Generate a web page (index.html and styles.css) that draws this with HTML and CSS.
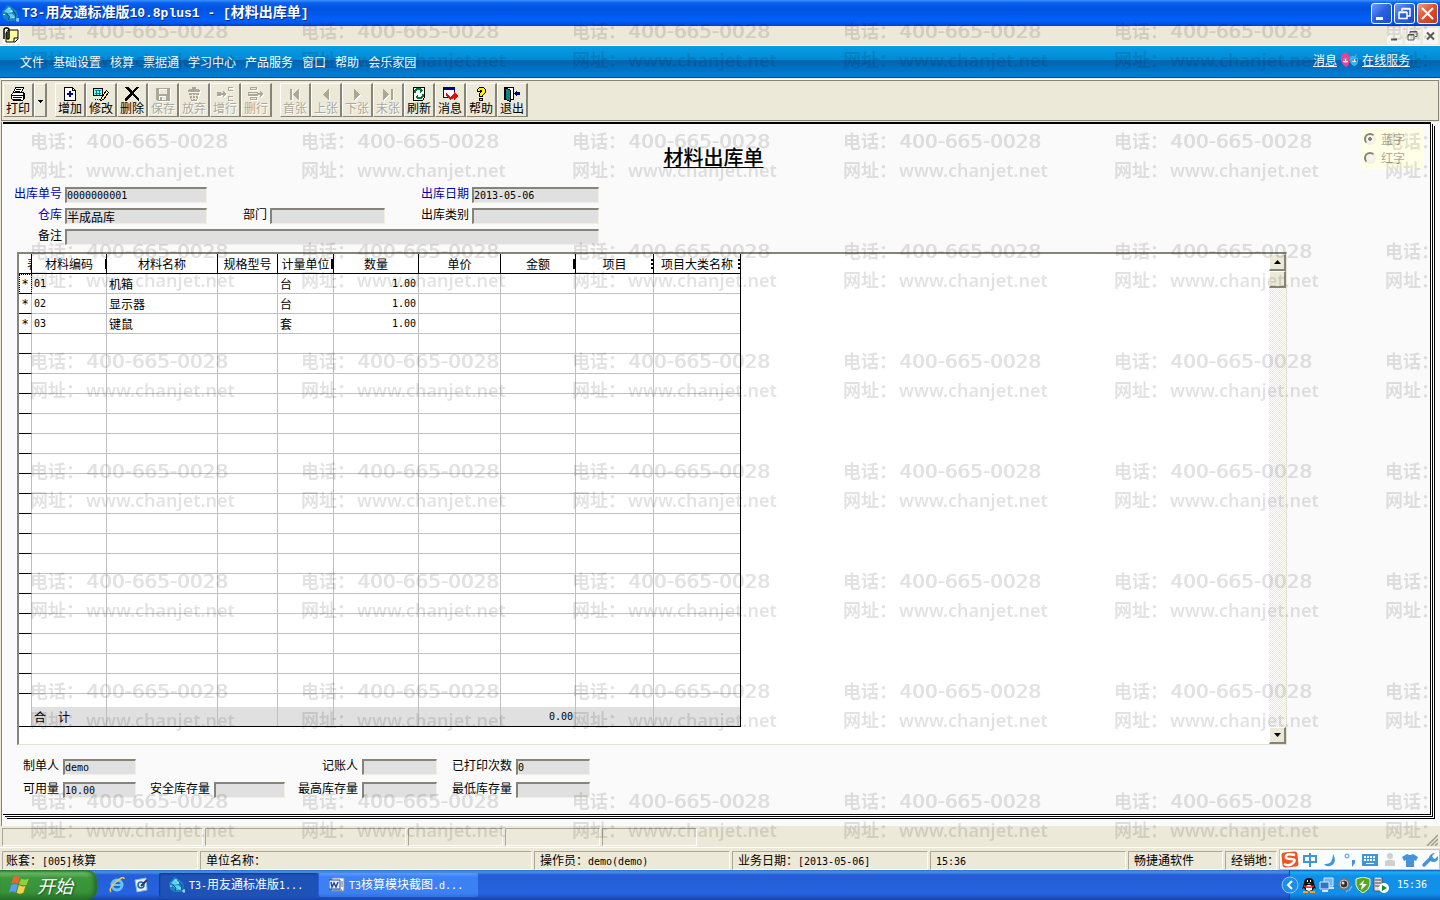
FILE: index.html
```html
<!DOCTYPE html>
<html lang="zh-CN">
<head>
    <meta charset="UTF-8">
    <title>T3-用友通标准版</title>
    <link rel="stylesheet" href="styles.css">
</head>
<body>
<svg width="0" height="0" class="defs">
    <symbol id="logo" viewBox="0 0 16 16">
        <path d="M0 6L3 3 5 0 8 1 10 3 13 5 15 9 14 12 12 15H5L1 12Z" fill="#1686c4"/>
        <path d="M2 6l4-4 5 4-5 2zM4 9l5-1 4 3-5 2z" fill="#5fd0ee"/>
        <path d="M4 8l3 3-1 3M10 5l3 4-1 4" stroke="#0b4a86" fill="none"/>
        <path d="M1 9h2M8 6h2M6 3h2M10 12h2M14 13h2v2h-2z" stroke="#c8f2ff" fill="none"/>
    </symbol>
</svg>
<div class="app">
    <header class="titleBar">
        <svg class="logo"><use href="#logo"/></svg>
        <h1>T3-<b>用友通标准版</b>10.8plus1 - [<b>材料出库单</b>]</h1>
        <div class="winBtns">
            <button aria-label="最小化"><svg viewBox="0 0 19 19"><path d="M4 13h7v3H4z" fill="#fff"/></svg></button>
            <button aria-label="还原"><svg viewBox="0 0 19 19"><path d="M7 7V5h8v7h-3M7 4.500h8M4 8.500h8v6H4zM4 8h8" fill="none" stroke="#fff" stroke-width="1.500"/></svg></button>
            <button class="close" aria-label="关闭"><svg viewBox="0 0 19 19"><path d="M4 4l11 11M15 4L4 15" stroke="#fff" stroke-width="2"/></svg></button>
        </div>
    </header>
    <div class="mdiBar">
        <svg class="mdiIcon" viewBox="0 0 17 17"><path d="M0 0h17v17H0z" fill="#fff"/><path d="M5 3h10v9l-3 3H3V6z" fill="#ffff9c" stroke="#000"/><path d="M15 11h-4v4" fill="#fff" stroke="#000"/><path d="M1 12V3q0-2 2-2h1q2 0 2 2v8q0 1-1 1t-1-1V5" fill="none" stroke="#000" stroke-width="1.500"/></svg>
        <div class="mdiBtns">
            <button aria-label="最小化窗口"><svg viewBox="0 0 15 15"><path d="M4 10h6v2H4z" fill="#5b5b55"/></svg></button>
            <button aria-label="还原窗口"><svg viewBox="0 0 15 15"><path d="M5 5V3h7v5h-2M5 3.500h7M3 6.500h6v5H3zM3 6h6" fill="none" stroke="#5b5b55"/></svg></button>
            <button aria-label="关闭窗口"><svg viewBox="0 0 15 15"><path d="M4 4l7 7M11 4l-7 7" stroke="#5b5b55" stroke-width="2"/></svg></button>
        </div>
    </div>
    <nav class="menuBar">
        <a href="#">文件</a>
        <a href="#">基础设置</a>
        <a href="#">核算</a>
        <a href="#">票据通</a>
        <a href="#">学习中心</a>
        <a href="#">产品服务</a>
        <a href="#">窗口</a>
        <a href="#">帮助</a>
        <a href="#">会乐家园</a>
        <div class="service">
            <a href="#">消息</a>
            <svg width="19" height="18" viewBox="0 0 19 18"><path d="M1 5q1-3 4-3l1-2 1 3q4 1 3 6-1 6-4 7-4-2-5-7z" fill="#e8419a"/><path d="M10 6q2-2 4-1l3-2-1 3q3 1 2 5-1 4-4 4-5-2-4-9z" fill="#35b5ea"/><path d="M3 8q2-1 5 0v3q-3 1-5 0zM12 8h4v3h-4z" fill="#ffd9dc"/><path d="M4 8v2M7 8v2M13 8v2M16 8v2" stroke="#333"/></svg>
            <a href="#">在线服务</a>
        </div>
    </nav>
    <div class="toolBar">
        <div class="group">
            <button class="print"><svg viewBox="0 0 16 16"><path d="M5.500 1.500h8l-2 5h-8z" fill="#fff" stroke="#000"/><path d="M6 3.500h5M5 5.500h5" stroke="#000"/><path d="M1.500 8.500l2-2h10l1 2v4l-2 2h-9l-2-2z" fill="#fff" stroke="#000"/><path d="M2 9.500h11M3 11.500h9M3 13.500h8M13.500 8v5" stroke="#000"/></svg>打印</button>
            <button class="drop" aria-label="打印选项"><svg viewBox="0 0 5 3"><path d="M0 0h5L2.500 3z"/></svg></button>
        </div>
        <div class="group">
            <button><svg viewBox="0 0 16 16"><path d="M2.500 1.500h8l3 3v10h-11z" fill="#fff" stroke="#000"/><path d="M10.500 1.500v3h3" fill="none" stroke="#000"/><path d="M8 5v6M5 8h6" stroke="#00008b" stroke-width="2"/></svg>增加</button>
            <button><svg viewBox="0 0 16 16"><path d="M.5 2.500h9v7h-9z" fill="#7ff" stroke="#000"/><path d="M2 4.500h6M2 7.500h6M3.500 4v5M6.500 4v5" stroke="#008080"/><path d="M13.500 4.500l2 2-5 7-3 1 1-3z" fill="#ff6" stroke="#000"/><path d="M2 13.500h5" stroke="#000" stroke-dasharray="1 1"/></svg>修改</button>
            <button><svg viewBox="0 0 16 16"><path d="M1 1h3l4 4 5-4h2v1L9 7l6 6v2h-1L8 9l-6 6H1v-2l5-6-5-5z" fill="#000"/></svg>删除</button>
            <button disabled><svg viewBox="0 0 16 16"><path d="M1 2h14v13H2l-1-1zM4 3v5h8V3zM4 10v4h7v-4z" fill-rule="evenodd"/><path d="M5 11h2v3H5z"/></svg>保存</button>
            <button disabled><svg viewBox="0 0 16 16"><path d="M2 4q5-3 12 0v2H2zM6 1h4v2H6zM3 7h10l-2 8H5z"/><path d="M6.500 8v6M9.500 8v6M4 9.500h8M5 12.500h6" stroke="#ece9d8"/></svg>放弃</button>
            <button disabled><svg viewBox="0 0 16 16"><path d="M0 6h4v4H0zM4 7h2v2H4zM6 5l4 3-4 3z"/><path d="M16 1.500h-4.500v3H16M16 10.500h-4.500v4H16" fill="none" stroke="#aca899"/></svg>增行</button>
            <button disabled><svg viewBox="0 0 16 16"><path d="M2 1h7v3H2zM2 11h7v3H2zM0 6h10v4H0zM10 7h2v2h-2zM12 5l4 3-4 3z"/><path d="M3 2.500h5M3 12.500h5M1 7.500h8" stroke="#ece9d8"/></svg>删行</button>
        </div>
        <div class="group">
            <button disabled><svg viewBox="0 0 16 16"><path d="M3 3h2v11H3zM12 3v11L6 8.500z"/></svg>首张</button>
            <button disabled><svg viewBox="0 0 16 16"><path d="M11 3v11L5 8.500z"/></svg>上张</button>
            <button disabled><svg viewBox="0 0 16 16"><path d="M5 3v11l6-5.500z"/></svg>下张</button>
            <button disabled><svg viewBox="0 0 16 16"><path d="M3 3v11l6-5.500zM11 3h2v11h-2z"/></svg>末张</button>
            <button><svg viewBox="0 0 16 16"><path d="M2.500 1.500h11v10l-2 3h-9z" fill="#fff" stroke="#000"/><path d="M4 7V5l2-2h3M12 8v2l-2 2H7" fill="none" stroke="#087830" stroke-width="2"/><path d="M9 2v5l3-3zM7 8v6l-3-3z" fill="#087830"/></svg>刷新</button>
            <button><svg viewBox="0 0 16 16"><path d="M1.500 1.500h11v10h-11z" fill="#fff" stroke="#000080"/><path d="M1 1h12v3H1z" fill="#000080"/><path d="M4 7l4 4 4-3V6l4 4-4 4v-2l-4 2-4-5z" fill="#e01010"/></svg>消息</button>
            <button><svg viewBox="0 0 16 16"><path d="M4.500 5.500v-2l2-2h4l2 2v3l-3 3v1h-3v-3l2-2v-1h-1v1zM6.500 12.500h3v2h-3z" fill="#ffee00" stroke="#000"/></svg>帮助</button>
            <button><svg viewBox="0 0 16 16"><path d="M.5 1.500h9v12h-9z" fill="#fff" stroke="#000"/><path d="M1.500 1.500l5 3v11l-5-2z" fill="#088" stroke="#000"/><path d="M10 7l3-3v2h3v3h-3v2z" fill="#000080"/></svg>退出</button>
        </div>
    </div>
    <main class="work">
        <form class="bill">
            <div class="billHead">
                <h2>材料出库单</h2>
                <div class="kind">
                    <label><input type="radio" name="kind" checked disabled>蓝字</label>
                    <label><input type="radio" name="kind" disabled>红字</label>
                </div>
            </div>
            <div class="fields">
                <label class="must" for="billNo">出库单号</label><input class="en" id="billNo" value="0000000001" readonly>
                <label class="must date" for="billDate">出库日期</label><input class="en" id="billDate" value="2013-05-06" readonly>
                <label class="must" for="store">仓库</label><input id="store" value="半成品库" readonly>
                <label for="dept">部门</label><input id="dept" readonly>
                <label for="type">出库类别</label><input id="type" readonly>
                <label for="memo">备注</label><input class="memo" id="memo" readonly>
            </div>
            <div class="sheet">
                <table>
                    <colgroup>
                        <col class="c0"><col class="c1"><col class="c2"><col class="c3"><col class="c4"><col class="c5"><col class="c6"><col class="c7"><col class="c8"><col class="c9">
                    </colgroup>
                    <thead>
                    <tr><th class="half">表</th><th class="cut">材料编码</th><th>材料名称</th><th>规格型号</th><th class="cut">计量单位</th><th>数量</th><th>单价</th><th class="cut">金额</th><th class="cut">项目</th><th class="cut">项目大类名称</th></tr>
                    </thead>
                    <tbody id="rows">
                    <tr><th class="focus">*</th><td class="en">01</td><td>机箱</td><td></td><td>台</td><td class="en num">1.00</td><td></td><td></td><td></td><td></td></tr>
                    <tr><th>*</th><td class="en">02</td><td>显示器</td><td></td><td>台</td><td class="en num">1.00</td><td></td><td></td><td></td><td></td></tr>
                    <tr><th>*</th><td class="en">03</td><td>键鼠</td><td></td><td>套</td><td class="en num">1.00</td><td></td><td></td><td></td><td></td></tr>
                    </tbody>
                    <tfoot>
                    <tr class="rest"><th></th><td></td><td></td><td></td><td></td><td></td><td></td><td></td><td></td><td></td></tr>
                    <tr class="total"><th></th><td>合　计</td><td></td><td></td><td></td><td></td><td></td><td class="en num">0.00</td><td></td><td></td></tr>
                    </tfoot>
                </table>
                <div class="scroll">
                    <button type="button" aria-label="向上"><svg viewBox="0 0 7 4"><path d="M0 4h7L3.500 0z"/></svg></button>
                    <div class="thumb"></div>
                    <button type="button" class="down" aria-label="向下"><svg viewBox="0 0 7 4"><path d="M0 0h7L3.500 4z"/></svg></button>
                </div>
            </div>
            <div class="fields billFoot">
                <label for="maker">制单人</label><input class="en" id="maker" value="demo" readonly>
                <label class="keeper" for="keeper">记账人</label><input id="keeper" readonly>
                <label for="printed">已打印次数</label><input class="en" id="printed" value="0" readonly>
                <label for="usable">可用量</label><input class="en" id="usable" value="10.00" readonly>
                <label for="safe">安全库存量</label><input id="safe" readonly>
                <label for="max">最高库存量</label><input id="max" readonly>
                <label for="min">最低库存量</label><input id="min" readonly>
            </div>
        </form>
    </main>
    <div class="paneBar">
        <span class="wide"></span><span class="wide"></span><span></span><span></span><span></span>
        <svg class="grip" viewBox="0 0 12 12"><path d="M12 1L1 12M12 5L5 12M12 9l-3 3" stroke="#9d9a88" stroke-width="1.500"/></svg>
    </div>
    <div class="statusBar">
        <span>账套：<i>[005]</i>核算</span>
        <span class="unit">单位名称：</span>
        <span>操作员：<i>demo(demo)</i></span>
        <span>业务日期：<i>[2013-05-06]</i></span>
        <span><i>15:36</i></span>
        <span class="soft">畅捷通软件</span>
        <span class="area">经销地：</span>
        <div class="ime">
            <svg viewBox="0 0 18 18"><rect x="1" y="1" width="16" height="15" rx="3" transform="rotate(-6 9 9)" fill="#ea5520"/><path d="M14 4q-8-2-9 1t5 3 2 4-9 1" fill="none" stroke="#fff" stroke-width="2.500"/></svg>
            <svg viewBox="0 0 18 18"><path d="M3 5h12v6H3zM9 2v14" fill="none" stroke="#4593d8" stroke-width="2"/></svg>
            <svg viewBox="0 0 18 18"><path d="M12 3q5 9-3 12-4 1-6-2 9 1 9-10z" fill="#4593d8"/></svg>
            <svg viewBox="0 0 18 18"><circle cx="6" cy="5" r="2" fill="none" stroke="#4593d8"/><path d="M11 9h3v3l-3 4v-3z" fill="#4593d8"/></svg>
            <svg viewBox="0 0 18 18"><path d="M1 3h16v12H1z" fill="#4593d8"/><path d="M3 6h12M3 9h12" stroke="#fff" stroke-width="2" stroke-dasharray="2 1"/><path d="M5 12.500h8" stroke="#fff"/></svg>
            <svg viewBox="0 0 18 18"><circle cx="9" cy="5" r="3" fill="#d0d0d0"/><path d="M4 10q5-3 10 0v5H4z" fill="#d0d0d0"/></svg>
            <svg viewBox="0 0 18 18"><path d="M6 3q3 2 6 0l5 3-2 4-2-1v7H5V9l-2 1-2-4z" fill="#4593d8"/></svg>
            <svg viewBox="0 0 18 18"><path d="M3 14l7-7" stroke="#4593d8" stroke-width="3.500" stroke-linecap="round"/><path d="M14 2l-3 3 1 2 2 1 3-3q1 6-5 6-5-1-4-5 2-4 6-4z" fill="#4593d8"/></svg>
        </div>
    </div>
    <footer class="taskBar">
        <button class="start"><svg viewBox="0 0 20 20"><path d="M4 3q3-2 6 0L8 9Q5 7 2 9z" fill="#f0642c"/><path d="M11 4q3 2 7 0l-2 6q-3 1-7-1z" fill="#8fd03c"/><path d="M2 10q3-2 6 0l-2 7q-3-2-6 0z" fill="#5a9cf4"/><path d="M9 10q3 2 6 1l-2 6q-3 2-6 0z" fill="#fbd03a"/></svg>开始</button>
        <div class="quick">
            <svg viewBox="0 0 16 16"><circle cx="8" cy="8" r="5" fill="none" stroke="#67c3ff" stroke-width="3"/><path d="M4 8h9" stroke="#67c3ff" stroke-width="2"/><path d="M2 15Q-1 12 7 5t8-3" fill="none" stroke="#f6c842" stroke-width="1.500"/></svg>
            <svg viewBox="0 0 16 16"><path d="M2 3l11-2 1 12-10 2z" fill="#e8f3ff" stroke="#7db7ee"/><circle cx="8" cy="8" r="3" fill="none" stroke="#1b62ba" stroke-width="1.500"/><path d="M8 9l6-6" stroke="#335" stroke-width="2"/></svg>
        </div>
        <button class="task on"><svg class="icon16"><use href="#logo"/></svg><span><i>T3-</i>用友通标准版<i>1...</i></span></button>
        <button class="task"><svg class="icon16" viewBox="0 0 16 16"><path d="M3 1h12v13H3z" fill="#fff" stroke="#88a"/><path d="M0 3h11v9H0z" fill="#e9eefb" stroke="#234a9c"/><path d="M2 5l1 5 2-4 2 4 2-5" fill="none" stroke="#234a9c" stroke-width="1.500"/><path d="M12 5h2M12 7h2M12 9h2M4 13h9" stroke="#567"/></svg><span><i>T3</i>核算模块截图<i>.d...</i></span></button>
        <div class="tray">
            <button class="fold" aria-label="隐藏图标"><svg viewBox="0 0 18 18"><circle cx="9" cy="9" r="8" fill="#1e8ceb" stroke="#8fc6f8"/><path d="M11 5L7 9l4 4" fill="none" stroke="#fff" stroke-width="2"/></svg></button>
            <svg viewBox="0 0 16 16"><path d="M3 6q0-5 5-5t5 5l2 6-2-1-2 3H5l-2-3-2 1z" fill="#111"/><path d="M5 9q3-2 6 0v4l-3 1-3-1z" fill="#fff"/><path d="M3 8q5 3 10 0v2q-5 2-10 0z" fill="#e22"/><path d="M6 3h1v2H6zM9 3h1v2H9z" fill="#fff"/><path d="M6 6h4l-2 1zM2 14h5v2H2zM9 14h5v2H9z" fill="#f9a51a"/></svg>
            <svg viewBox="0 0 16 16"><path d="M5 1h9v8H5z" fill="#6db7f4" stroke="#d8e8f8"/><path d="M1 5h9v7H1z" fill="#2c76c8" stroke="#d8e8f8"/><path d="M3 14h6M10 11h5" stroke="#dde" stroke-width="2"/></svg>
            <svg viewBox="0 0 16 16"><circle cx="7" cy="7" r="6" fill="#777"/><circle cx="7" cy="7" r="4" fill="#333" stroke="#ccc"/><circle cx="6" cy="6" r="1.500" fill="#ddd"/><path d="M12 14l3-5M9 15l2-2" stroke="#7ba6ff" stroke-width="1.500"/></svg>
            <svg viewBox="0 0 16 16"><path d="M8 0l7 2v6q-1 5-7 8-6-3-7-8V2z" fill="#58a71c" stroke="#eef8d0"/><path d="M9 3L4 8h3l-1 5 6-6H8z" fill="#fff"/></svg>
            <svg viewBox="0 0 16 16"><path d="M1 0h8v14H1z" fill="#ddd" stroke="#555"/><path d="M2 3h6M2 6h6M2 9h6" stroke="#444"/><circle cx="11" cy="11" r="5" fill="#fff"/><path d="M9 8l5 3-5 3z" fill="#1a9020"/></svg>
            <time>15:36</time>
        </div>
    </footer>
    <div class="watermark" id="watermark" aria-hidden="true"></div>
</div>
<script type="text/javascript">
    // 补足空白行
    var rows = document.getElementById('rows');
    while (rows.rows.length < 21) {
        var tr = document.createElement('tr');
        tr.innerHTML = '<th></th>' + new Array(10).join('<td></td>');
        rows.appendChild(tr);
    }
    // 水印平铺
    var mark = '<div class="mark"><p><b>电话：</b><span class="tel">400-665-0028</span></p><p><b>网址：</b>www.chanjet.net</p></div>';
    document.getElementById('watermark').innerHTML = new Array(49).join(mark);
</script>
</body>
</html>
```
FILE: styles.css
```css
*{
    box-sizing: border-box;
}
body,h1,h2,p{
    margin: 0;
}
body{
    font: 12px/16px "Noto Sans CJK SC", sans-serif;
    color: #000;
    background: #ece9d8;
}
button,input{
    font: inherit;
    padding: 0;
    margin: 0;
    border: 0;
    border-radius: 0;
}
i,.en{
    font-family: "DejaVu Sans Mono", "Noto Sans CJK SC", monospace;
    font-size: 10px;
    font-style: normal;
}
.defs{
    position: absolute;
}
.icon16{
    width: 16px;
    height: 16px;
    flex: none;
}
.app{
    position: relative;
    display: flex;
    flex-direction: column;
    min-height: 100vh;
    overflow: hidden;
}
/* 标题栏 */
.titleBar{
    display: flex;
    align-items: center;
    height: 26px;
    padding: 0 2px 0 2px;
    background: linear-gradient(#3b93ff 0, #0a5ff0 3px, #0053e1 9px, #0060fa 20px, #0058ee 23px, #0340c4);
}
.logo{
    width: 17px;
    height: 17px;
    flex: none;
}
.titleBar h1{
    flex: 1;
    padding: 0 0 2px 3px;
    font: bold 13px/20px "Liberation Mono", monospace;
    color: #fff;
    text-shadow: 1px 1px #0a2a80;
    white-space: pre;
}
.titleBar h1 b{
    font: bold 14px/20px "Noto Sans CJK SC", sans-serif;
}
.winBtns{
    display: flex;
    gap: 2px;
}
.winBtns button{
    width: 21px;
    height: 21px;
    border: 1px solid #fff;
    border-radius: 3px;
    background: linear-gradient(135deg, #6f9cf5, #2a5fe0 50%, #1c4fd0);
}
.winBtns .close{
    background: linear-gradient(135deg, #f09a80, #df4f27 50%, #c23a12);
}
.winBtns svg,.mdiBtns svg{
    display: block;
    width: 100%;
    height: 100%;
}
.mdiBar{
    display: flex;
    align-items: center;
    justify-content: space-between;
    height: 20px;
    padding: 0 2px 0 3px;
    border-bottom: 1px solid #fff;
}
.mdiIcon{
    width: 17px;
    height: 17px;
}
.mdiBtns{
    display: flex;
    gap: 3px;
}
.mdiBtns button{
    width: 15px;
    height: 16px;
    background: #f6f5f0;
}
/* 菜单 */
.menuBar{
    display: flex;
    align-items: center;
    gap: 9px;
    height: 32px;
    padding: 0 30px 0 20px;
    border-bottom: 1px solid #04518e;
    background: linear-gradient(#0a9ce6 0, #0089d3 14px, #0063ae 14px, #007fd6 31px);
}
.menuBar a{
    color: #fff;
    text-decoration: none;
}
.service{
    display: flex;
    align-items: center;
    gap: 3px;
    margin: 0 0 4px auto;
}
.service a{
    text-decoration: underline;
}
/* 工具栏 */
.toolBar{
    display: flex;
    gap: 8px;
    height: 41px;
    margin: 2px 1px 1px 1px;
    padding: 2px 1px;
    border: 1px solid #868478;
    box-shadow: 0 -1px #fff;
}
.group{
    display: flex;
}
.toolBar button{
    display: flex;
    flex-direction: column;
    align-items: center;
    width: 31px;
    height: 34px;
    padding-top: 2px;
    line-height: 12px;
    color: #000;
    background: #ece9d8;
    border: 1px solid;
    border-color: #fff #868478 #868478 #fff;
    border-right-width: 2px;
}
.toolBar svg{
    width: 16px;
    height: 16px;
    flex: none;
    shape-rendering: crispEdges;
}
.toolBar button:disabled{
    color: #aca899;
    text-shadow: 1px 1px #fff;
}
.toolBar button:disabled svg{
    fill: #aca899;
    filter: drop-shadow(1px 1px #fff);
}
.toolBar .drop{
    width: 13px;
    justify-content: center;
}
.toolBar .drop svg{
    width: 5px;
    height: 3px;
}
/* 单据 */
.work{
    flex: 1;
    display: flex;
    padding: 0 9px 11px 1px;
    margin-left: 1px;
    border-left: 1px solid #868478;
    background: #fafafa;
}
.bill{
    flex: 1;
    border: 1px solid #000;
    border-top-width: 2px;
    border-left-width: 0;
    box-shadow: 1px 1px #fff, 2px 2px #000, 3px 3px #fff, 4px 4px #000;
    background: #fafafa;
}
.billHead{
    display: grid;
    grid-template-columns: 1fr auto 1fr;
    align-items: end;
    padding: 3px 6px 0 0;
}
.billHead h2{
    grid-column: 2;
    font-size: 20px;
    line-height: 24px;
    font-weight: 500;
    text-decoration: underline;
    text-decoration-thickness: 1px;
    text-underline-offset: 2px;
}
.kind{
    justify-self: end;
    width: 62px;
    padding: 2px 0 2px 2px;
    background: #ffffe6;
}
.kind label{
    display: flex;
    align-items: center;
    gap: 5px;
    height: 19px;
    color: #aca899;
}
.kind input{
    appearance: none;
    width: 12px;
    height: 12px;
    border: 2px solid;
    border-color: #868478 #f1efe2 #f1efe2 #868478;
    border-radius: 50%;
    background: #f6f4ea;
}
.kind input:checked{
    background: radial-gradient(#868478 2px, #f6f4ea 2px);
}
.fields{
    display: grid;
    grid-template-columns: 48px 142px 57px 115px 81px 127px;
    grid-auto-rows: 16px;
    gap: 5px 3px;
    padding: 18px 0 0 11px;
}
.fields label{
    text-align: right;
    line-height: 12px;
    white-space: nowrap;
}
.fields input{
    width: 100%;
    height: 16px;
    min-width: 0;
    background: #e0e0e0;
    border: 1px solid;
    border-color: #868478 #f1efe2 #f1efe2 #868478;
    border-width: 2px 1px 1px 2px;
}
.fields .must{
    color: #0000b4;
}
.fields .date{
    grid-column: 5;
}
.fields .memo{
    grid-column: 2 / 7;
}
.sheet{
    display: flex;
    justify-content: space-between;
    align-items: flex-start;
    margin: 7px 143px 0 14px;
    border: 1px solid;
    border-color: #868478 #e4e2d4 #e4e2d4 #868478;
    border-width: 2px 1px 1px 2px;
    background: #fff;
}
.sheet table{
    table-layout: fixed;
    width: 722px;
    border-collapse: separate;
    border-spacing: 0;
    border-right: 1px solid #000;
    border-bottom: 1px solid #000;
}
.c0{ width: 13px; }
.c1{ width: 75px; }
.c2{ width: 111px; }
.c3{ width: 60px; }
.c4{ width: 56px; }
.c5{ width: 85px; }
.c6{ width: 82px; }
.c7{ width: 75px; }
.c8{ width: 78px; }
.c9{ width: 86px; }
.sheet th,.sheet td{
    height: 20px;
    padding: 0 2px;
    line-height: 18px;
    font-weight: normal;
    white-space: nowrap;
    overflow: hidden;
    border-right: 1px solid #c0c0c0;
    border-bottom: 1px solid #c0c0c0;
}
.sheet th:last-child,.sheet td:last-child{
    border-right: 0;
}
.sheet th{
    padding: 0;
    border-bottom-color: #000;
}
.sheet thead th{
    border-color: #000;
    position: relative;
}
/* 表头右侧被截断的列名 */
.sheet .cut::after{
    content: "";
    position: absolute;
    right: 0;
    top: 5px;
    width: 2px;
    height: 10px;
    background: #000;
}
.sheet .cut:nth-child(2)::after{
    width: 1px;
}
.sheet .cut:nth-child(9)::after,.sheet .cut:last-child::after{
    background: repeating-linear-gradient(#000 0 2px, #fff 2px 4px);
}
.sheet .half{
    padding-left: 8px;
    text-align: left;
    text-overflow: clip;
}
.sheet tbody th{
    font: 12px/18px "DejaVu Sans Mono", monospace;
}
.sheet .focus{
    outline: 1px dotted #000;
    outline-offset: -1px;
}
.sheet .num{
    text-align: right;
}
.sheet .rest th,.sheet .rest td{
    height: 13px;
    border-bottom: 0;
}
.sheet .total th,.sheet .total td{
    height: 19px;
    border-bottom: 0;
}
.sheet .total td{
    background: #e0e0e0;
}
.scroll{
    display: flex;
    flex-direction: column;
    align-self: stretch;
    width: 17px;
    min-height: 490px;
    background: repeating-conic-gradient(#fff 0 25%, #ece9d8 0 50%) 0 0 / 2px 2px;
}
.scroll button,.thumb{
    width: 17px;
    height: 17px;
    background: #ece9d8;
    border: 1px solid;
    border-color: #fff #868478 #868478 #fff;
    border-width: 1px 2px 2px 1px;
}
.scroll svg{
    display: block;
    width: 7px;
    height: 4px;
    margin: auto;
}
.scroll .down{
    margin-top: auto;
}
.billFoot{
    grid-template-columns: 46px 73px 70px 71px 69px 75px 71px 74px;
    gap: 7px 4px;
    padding: 14px 0 15px 10px;
}
.billFoot .keeper{
    grid-column: 5;
}
/* 状态栏 */
.paneBar{
    display: flex;
    gap: 2px;
    height: 22px;
    padding: 2px 2px 1px;
    border-bottom: 1px solid #fff;
}
.paneBar span,.statusBar span{
    border: 1px solid;
    border-color: #aca899 #fff #fff #aca899;
}
.paneBar span{
    width: 95px;
}
.paneBar .wide{
    width: 201px;
}
.grip{
    width: 12px;
    height: 12px;
    margin: auto 0 0 auto;
}
.statusBar{
    display: flex;
    gap: 2px;
    height: 22px;
    padding: 3px 0 0 2px;
}
.statusBar span{
    width: 196px;
    padding-left: 3px;
    line-height: 16px;
    white-space: nowrap;
}
.statusBar .unit{
    flex: 1;
    padding-left: 5px;
}
.statusBar span + span{
    padding-left: 5px;
}
.statusBar .soft{
    width: 95px;
}
.statusBar .area{
    width: 52px;
}
.ime{
    display: flex;
    align-items: center;
    gap: 2px;
    width: 161px;
    height: 21px;
    margin-top: -2px;
    padding-left: 1px;
    background: #fafdff;
    border: 1px solid #a9c9e6;
}
.ime svg{
    width: 18px;
    height: 18px;
}
/* 任务栏 */
.taskBar{
    display: flex;
    align-items: center;
    height: 30px;
    color: #fff;
    background: linear-gradient(#3168d5 0, #4993e6 2px, #245dd7 5px, #2663e0 24px, #1941a5);
}
.start{
    display: flex;
    align-items: center;
    gap: 6px;
    width: 97px;
    height: 30px;
    padding-left: 9px;
    color: #fff;
    font-size: 18px;
    font-style: italic;
    text-shadow: 1px 1px 2px #1b4d1b;
    border-radius: 0 10px 10px 0;
    background: linear-gradient(#2f7a2f 0, #6cb868 3px, #3c983c 8px, #389238 22px, #27702a);
    box-shadow: inset -3px 0 4px #246b28;
}
.start svg{
    width: 22px;
    height: 22px;
}
.quick{
    display: flex;
    gap: 8px;
    width: 62px;
    padding-left: 12px;
}
.quick svg,.tray svg{
    width: 16px;
    height: 16px;
}
.task{
    display: flex;
    align-items: center;
    gap: 4px;
    width: 159px;
    height: 24px;
    padding-left: 10px;
    margin-right: 1px;
    color: #fff;
    white-space: pre;
    border-radius: 2px;
    background: linear-gradient(#5a9cff, #3c81f3 4px, #3c81f3 20px, #2e6fe0);
}
.task.on{
    background: #1e52b7;
    box-shadow: inset 1px 1px 2px #123a86;
}
.tray{
    display: flex;
    align-items: center;
    gap: 2px;
    height: 30px;
    margin-left: auto;
    padding-right: 13px;
    background: linear-gradient(#0c59b9 0, #18b0f4 2px, #1290e8 6px, #1190ea 24px, #0b5fb8);
    border-left: 1px solid #0f4aa8;
}
.fold{
    width: 18px;
    height: 18px;
    margin-left: -9px;
    background: none;
}
.tray .fold svg{
    display: block;
    width: 18px;
    height: 18px;
}
.tray time{
    padding-left: 6px;
    font: 10px/16px "DejaVu Sans Mono", monospace;
}
/* 水印 */
.watermark{
    position: absolute;
    top: 18px;
    left: 30px;
    right: 0;
    bottom: 57px;
    display: grid;
    grid-template-columns: repeat(6, 271px);
    grid-auto-rows: 110px;
    overflow: hidden;
    pointer-events: none;
    opacity: 0.11;
}
.mark p{
    height: 29px;
    font: 600 18px/24px "Noto Sans", sans-serif;
    white-space: nowrap;
}
.mark b{
    display: inline-block;
    width: 56px;
    font: 700 18px/24px "Noto Sans CJK SC", sans-serif;
}
.mark .tel{
    font: 20px/24px "DejaVu Sans", sans-serif;
    text-shadow: 1px 0 #000;
}
```
